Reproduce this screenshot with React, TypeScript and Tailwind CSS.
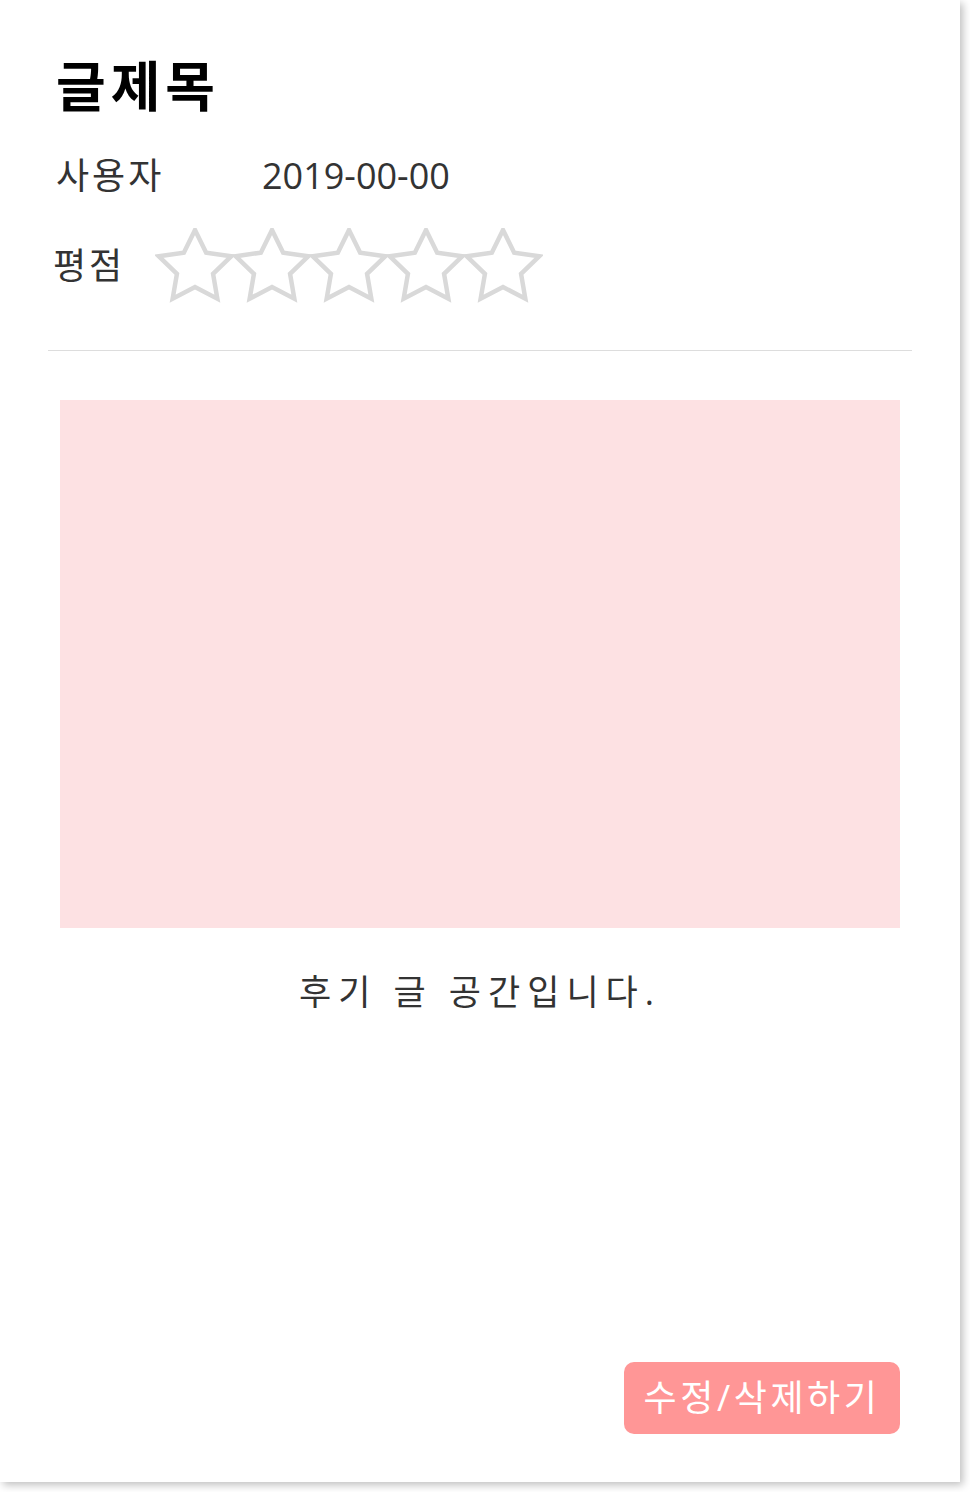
import React from "react";

const Star = ({ className }: { className?: string }) => (
  <svg
    width="80"
    height="76"
    viewBox="0 0 80 76"
    className={className}
  >
    <polygon
      points="40,2 51.17,24.63 76.14,28.26 58.07,45.87 62.34,70.74 40,59 17.66,70.74 21.93,45.87 3.86,28.26 28.83,24.63"
      fill="none"
      stroke="#d9d9d9"
      strokeWidth="4.5"
      strokeLinejoin="miter"
    />
  </svg>
);

export default function App() {
  const font = { fontFamily: '"Open Sans", "Noto Sans CJK KR", sans-serif' };
  return (
    <div className="bg-white w-[970px] h-[1492px]" style={font}>
      <div className="w-[960px] h-[1482px] bg-white shadow-[3px_3px_8px_rgba(0,0,0,0.25)] flex flex-col">
        <div className="pl-[56px] pt-[54px]">
          <h1 className="text-[54px] leading-[65px] font-bold text-black tracking-[5px]">글제목</h1>
          <div className="mt-[35px] flex items-center h-[44px] text-[36px] leading-[44px] text-[#333]">
            <span className="w-[206px] tracking-[3px]">사용자</span>
            <span>2019-00-00</span>
          </div>
          <div className="mt-[30px] flex items-center h-[76px]">
            <span className="text-[36px] leading-[44px] text-[#333] -ml-[3px] w-[102px] tracking-[3px]">평점</span>
            <div className="flex">
              <Star />
              <Star className="-ml-[3px]" />
              <Star className="-ml-[3px]" />
              <Star className="-ml-[3px]" />
              <Star className="-ml-[3px]" />
            </div>
          </div>
        </div>
        <div className="mx-[48px] mt-[46px] border-t border-[#dddddd]" />
        <div className="mx-[60px] mt-[49px] h-[528px] bg-[#fde1e3]" />
        <p className="mt-[42px] text-center text-[35px] leading-[44px] tracking-[0.2em] text-[#333]">
          후기 글 공간입니다.
        </p>
        <div className="mt-auto pb-[48px] pr-[60px] flex justify-end">
          <button className="w-[276px] h-[72px] rounded-[10px] bg-[#ff9696] text-white text-[36px] leading-[72px] tracking-[0.1em]">
            수정/삭제하기
          </button>
        </div>
      </div>
    </div>
  );
}
